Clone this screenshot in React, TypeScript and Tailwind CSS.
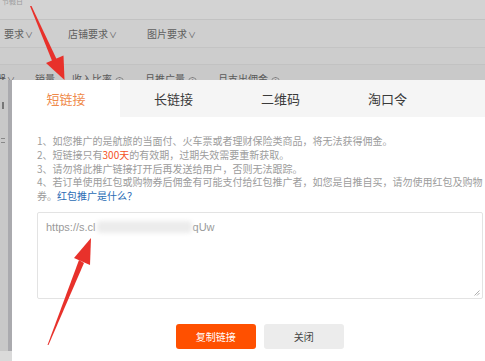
import React from "react";

const cjk = { fontFamily: '"Noto Sans CJK SC", "Noto Sans", sans-serif' };

function Chevron() {
  return <span className="ml-[1px] text-[8px]">∨</span>;
}

function Info() {
  return (
    <span className="ml-[3px] inline-flex h-[9px] w-[9px] items-center justify-center rounded-full border border-[#8a8a8a] text-[6px] leading-none">
      i
    </span>
  );
}

export default function App() {
  const tabs = ["短链接", "长链接", "二维码", "淘口令"];
  return (
    <div
      className="relative flex h-[361px] w-[485px] flex-col overflow-hidden bg-[#cfcfcf]"
      style={cjk}
    >
      {/* background page (under overlay) */}
      <div className="h-[20px] overflow-hidden border-b border-[#c2c2c2] bg-[#d3d3d3] pl-[2px] text-[7px] leading-[7px] text-[#9a9a9a]">
        <div className="-mt-[2px]">节假日</div>
      </div>
      <div className="flex h-[28px] items-center border-b border-[#c4c4c4] bg-[#cfcfcf] text-[10px] text-[#5e5e5e]">
        <span className="ml-[4px] w-[64px]">要求<Chevron /></span>
        <span className="w-[79px]">店铺要求<Chevron /></span>
        <span>图片要求<Chevron /></span>
      </div>
      <div className="h-[17px] border-b border-[#c2c2c2] bg-[#cdcdcd]" />
      <div className="h-[15px] overflow-hidden bg-[#c9c9c9] text-[10px] leading-[10px] text-[#5a5a5a]">
        <div className="flex pt-[9px]">
          <span className="-ml-[4px] w-[39px]">器<Chevron /></span>
          <span className="w-[37px]">销量</span>
          <span className="w-[73px]">收入比率<Info /></span>
          <span className="w-[73px]">月推广量<Info /></span>
          <span>月支出佣金<Info /></span>
        </div>
      </div>

      {/* main: left strip + modal */}
      <div className="flex flex-1">
        <div className="flex w-[12px] flex-col">
          <div className="flex flex-1">
            <div className="relative w-[8px] bg-[#c8c8c8]">
              <div className="absolute left-[2px] top-[22px] h-[7px] w-[1.5px] bg-[#777]" />
              <div className="absolute left-[1px] top-[58px] h-[1px] w-[4px] bg-[#888]" />
              <div className="absolute left-[1px] top-[62px] h-[1px] w-[4px] bg-[#888]" />
            </div>
            <div className="w-[4px] bg-[#aaaaae]" />
          </div>
          <div className="h-[10px] bg-[#dadada]" />
        </div>

        <div className="flex flex-1 flex-col bg-white">
          {/* tabs */}
          <div className="flex h-[37px] bg-[#f5f5f5]">
            {tabs.map((t, i) => (
              <div
                key={t}
                className={
                  i === 0
                    ? "flex w-[108px] items-center justify-center bg-white text-[13px] text-[#ef8a4a]"
                    : "flex w-[107px] items-center justify-center text-[13px] text-[#3a3a3a]"
                }
              >
                {t}
              </div>
            ))}
          </div>

          <div className="flex flex-col pl-[25px] pr-[15px]">
            <div className="mt-[17px] whitespace-nowrap text-[10px] leading-[13.75px] text-[#9c9c9c]">
              <div>1、如您推广的是航旅的当面付、火车票或者理财保险类商品，将无法获得佣金。</div>
              <div>
                2、短链接只有<span className="text-[#f4511e]">300天</span>的有效期，过期失效需要重新获取。
              </div>
              <div>3、请勿将此推广链接打开后再发送给用户，否则无法跟踪。</div>
              <div>4、若订单使用红包或购物券后佣金有可能支付给红包推广者，如您是自推自买，请勿使用红包及购物</div>
              <div>
                券。<span className="text-[#2b6cb5]">红包推广是什么？</span>
              </div>
            </div>

            <div className="relative mt-[9px] h-[87px] rounded-[2px] border border-[#e3e3e3] bg-white">
              <div
                className="mt-[7px] flex items-center pl-[8px] text-[11px] leading-[14px] text-[#9a9a9a]"
                style={{ fontFamily: '"Liberation Sans", Arial, sans-serif' }}
              >
                <span>https://s.cl</span>
                <span className="mx-[1px] h-[12px] w-[95px] rounded-[4px] bg-[#ececec] blur-[2px]" />
                <span>qUw</span>
              </div>
              <svg
                className="absolute bottom-[2px] right-[2px]"
                width="6"
                height="6"
                viewBox="0 0 6 6"
              >
                <path d="M0.5 5.5 L5.5 0.5 M3 5.5 L5.5 3" stroke="#9a9a9a" strokeWidth="0.8" />
              </svg>
            </div>

            <div className="mt-[25px] flex justify-center gap-[8px]">
              <button className="flex h-[25px] w-[80px] items-center justify-center rounded-[3px] bg-[#ff5000] text-[10px] text-white">
                复制链接
              </button>
              <button className="flex h-[25px] w-[80px] items-center justify-center rounded-[3px] bg-[#ececec] text-[10px] text-[#444]">
                关闭
              </button>
            </div>
          </div>
        </div>
      </div>

      {/* annotation arrows */}
      <svg
        className="pointer-events-none absolute left-0 top-0"
        width="485"
        height="361"
        viewBox="0 0 485 361"
      >
        <polygon points="30,6 31.5,6 57,60 52.5,62" fill="#e8312b" />
        <polygon points="46,63 63.5,55.5 64.5,80" fill="#e8312b" />
        <polygon points="47.5,345 48.5,345 84,263 79,260" fill="#e8312b" />
        <polygon points="74,258 90,265 91,238" fill="#e8312b" />
      </svg>
    </div>
  );
}
